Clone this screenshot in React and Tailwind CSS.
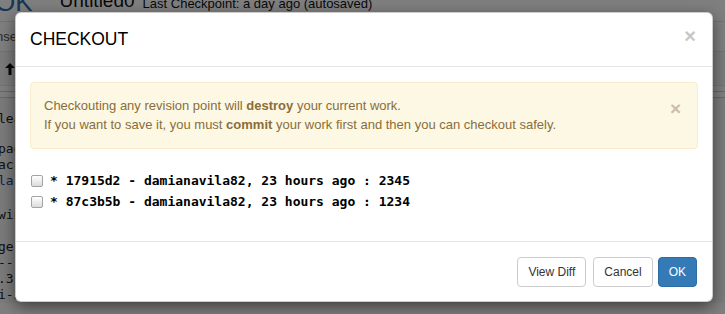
import React from 'react';

const commits = [
  '* 17915d2 - damianavila82, 23 hours ago : 2345',
  '* 87c3b5b - damianavila82, 23 hours ago : 1234',
];

const CloseX = ({ className }) => (
  <span className={`font-bold leading-none select-none ${className}`}>×</span>
);

const Checkbox = () => (
  <span className="w-[12px] h-[12px] ml-[1px] rounded-[2px] border border-[#a3a3a3] bg-gradient-to-b from-white to-[#dcdcdc] shadow-[inset_0_1px_0_rgba(255,255,255,0.8)]" />
);

const App = () => {
  return (
    <div className="relative w-[725px] h-[314px] overflow-hidden bg-white font-['Liberation_Sans',Arial,sans-serif]">
      {/* notebook behind the dialog */}
      <div className="h-[22px] flex items-start border-b border-[#e7e7e7] overflow-hidden">
        <span className="-ml-[5px] -mt-[11px] text-[26px] leading-none text-[#2f6eb0]">OK</span>
        <span className="ml-[27px] -mt-[9px] text-[19px] leading-none text-[#111]">Untitled0</span>
        <span className="ml-[8px] -mt-[3px] text-[13px] leading-none text-[#111]">Last Checkpoint: a day ago (autosaved)</span>
      </div>
      <div className="h-[30px] flex items-center border-b border-[#e7e7e7]">
        <span className="-ml-[4px] text-[13px] text-[#555]">nse</span>
      </div>
      <div className="h-[34px] flex items-center pl-[5px] border-b border-[#e7e7e7] bg-[#f7f7f7]">
        <svg width="10" height="12" viewBox="0 0 10 12">
          <path d="M5 0 L10 5 L6.5 5 L6.5 12 L3.5 12 L3.5 5 L0 5 Z" fill="#111" />
        </svg>
      </div>
      <div className="h-[6px] border-b border-[#cfcfcf]" />
      <div className="h-[6px] border-b border-[#cfcfcf]" />
      <div className="pt-[13px] font-['DejaVu_Sans_Mono',monospace] text-[13px] leading-[16px] text-[#222] bg-[#f7f7f7] whitespace-pre">
        <div className="-ml-[2px]">lear</div>
        <div className="-ml-[2px] mt-[14px]">pad</div>
        <div className="-ml-[2px]">ack</div>
        <div className="-ml-[2px] text-[#1d3fa0]">lar</div>
        <div className="-ml-[2px] mt-[18px]">win</div>
        <div className="-ml-[2px] mt-[16px]">ge</div>
        <div className="-ml-[2px]">---</div>
        <div className="-ml-[2px]">.3</div>
        <div className="flex">
          <span className="-ml-[2px] w-[188px]">i-3.0.13</span>
          <span className="w-[50px]">|</span>
          <span className="w-[64px]">2</span>
          <span>48 KB</span>
        </div>
      </div>

      {/* backdrop */}
      <div className="absolute inset-0 bg-black/50" />

      {/* modal */}
      <div className="absolute left-[15px] top-[12px] w-[698px] bg-white rounded-[6px] border border-black/20 shadow-[0_5px_15px_rgba(0,0,0,0.5)]">
        <div className="h-[54px] flex items-center justify-between pl-[14px] pr-[16px] border-b border-[#e5e5e5]">
          <h4 className="text-[17.5px] text-black leading-none">CHECKOUT</h4>
          <CloseX className="text-[20px] text-[#c7c7c7] mb-[8px]" />
        </div>
        <div className="px-[14px] pt-[15px] pb-[29px]">
          <div className="flex items-start justify-between rounded-[4px] border border-[#faebcc] bg-[#fcf8e3] text-[#8a6d3b] text-[13px] leading-[18.6px] pl-[13px] pr-[16px] py-[14px]">
            <div>
              <div>
                Checkouting any revision point will <b>destroy</b> your current work.
              </div>
              <div>
                If you want to save it, you must <b>commit</b> your work first and then you can checkout safely.
              </div>
            </div>
            <CloseX className="text-[19px] text-[#c8bfa9] mt-[2px]" />
          </div>
          <div className="mt-[21px] flex flex-col">
            {commits.map((c) => (
              <label key={c} className="h-[21px] flex items-center gap-[7px]">
                <Checkbox />
                <span className="font-['DejaVu_Sans_Mono',monospace] font-bold text-[13px] text-black whitespace-pre">{c}</span>
              </label>
            ))}
          </div>
        </div>
        <div className="border-t border-[#e5e5e5] px-[15px] pt-[15px] pb-[14px] flex justify-end gap-[5px]">
          <button className="h-[30px] px-[10px] rounded-[4px] border border-[#ccc] bg-white text-[#333] text-[12px]">View Diff</button>
          <button className="h-[30px] px-[10px] rounded-[4px] border border-[#ccc] bg-white text-[#333] text-[12px] ml-[2px]">Cancel</button>
          <button className="h-[30px] px-[10px] rounded-[4px] border border-[#2e6da4] bg-[#337ab7] text-white text-[12px]">OK</button>
        </div>
      </div>
    </div>
  );
};

export default App;
